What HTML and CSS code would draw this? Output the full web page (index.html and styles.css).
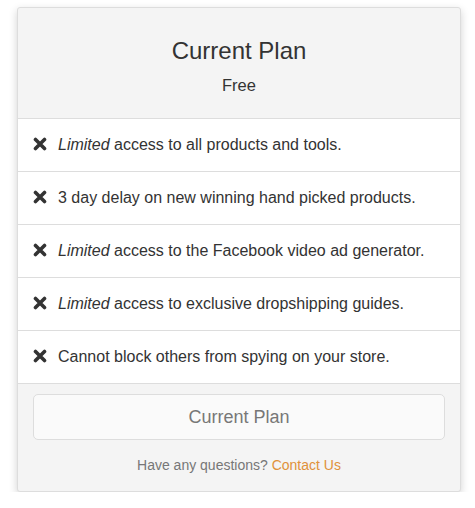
FILE: index.html
```html
<!DOCTYPE html>
<html>
<head>
<meta charset="utf-8">
<link rel="stylesheet" href="styles.css">
</head>
<body>
<div class="card">
  <div class="head">
    <h2 class="title">Current Plan</h2>
    <div class="price">Free</div>
  </div>
  <ul class="features">
    <li><svg class="x" viewBox="0 0 14 14"><path d="M2.5 2.5 L11.5 11.5 M11.5 2.5 L2.5 11.5"/></svg><span><em>Limited</em> access to all products and tools.</span></li>
    <li><svg class="x" viewBox="0 0 14 14"><path d="M2.5 2.5 L11.5 11.5 M11.5 2.5 L2.5 11.5"/></svg><span>3 day delay on new winning hand picked products.</span></li>
    <li><svg class="x" viewBox="0 0 14 14"><path d="M2.5 2.5 L11.5 11.5 M11.5 2.5 L2.5 11.5"/></svg><span><em>Limited</em> access to the Facebook video ad generator.</span></li>
    <li><svg class="x" viewBox="0 0 14 14"><path d="M2.5 2.5 L11.5 11.5 M11.5 2.5 L2.5 11.5"/></svg><span><em>Limited</em> access to exclusive dropshipping guides.</span></li>
    <li><svg class="x" viewBox="0 0 14 14"><path d="M2.5 2.5 L11.5 11.5 M11.5 2.5 L2.5 11.5"/></svg><span>Cannot block others from spying on your store.</span></li>
  </ul>
  <div class="foot">
    <button class="btn" type="button">Current Plan</button>
    <p class="help">Have any questions? <a href="#" class="link">Contact Us</a></p>
  </div>
</div>
</body>
</html>
```
FILE: styles.css
```css
* { box-sizing: border-box; }
body {
  margin: 0;
  padding: 7px 14px 0 17px;
  background: #fff;
  font-family: "Liberation Sans", Arial, sans-serif;
  color: #333;
}
.card {
  width: 444px;
  border: 1px solid #ddd;
  border-radius: 3px;
  background: #f4f4f4;
  box-shadow: 0 3px 8px rgba(0,0,0,0.18);
  overflow: hidden;
}
.head {
  height: 111px;
  padding-top: 30px;
  text-align: center;
  border-bottom: 1px solid #ddd;
}
.title {
  margin: 0;
  font-size: 24px;
  font-weight: normal;
  line-height: 26px;
  color: #333;
}
.price {
  margin-top: 11px;
  font-size: 16.5px;
  line-height: 20px;
}
.features {
  list-style: none;
  margin: 0;
  padding: 0;
  background: #fff;
}
.features li {
  height: 53px;
  display: flex;
  align-items: center;
  padding-left: 15px;
  border-bottom: 1px solid #ddd;
  font-size: 16px;
  line-height: 20px;
  color: #333;
}
.x {
  width: 14px;
  height: 14px;
  margin-right: 11px;
  margin-top: -2px;
  flex: none;
}
.x path {
  stroke: #333;
  stroke-width: 3.6;
  stroke-linecap: round;
  fill: none;
}
.foot {
  padding: 10px 15px 18px;
  text-align: center;
}
.btn {
  display: block;
  width: 100%;
  height: 46px;
  border: 1px solid #ddd;
  border-radius: 5px;
  background: #fafafa;
  color: #777;
  font-family: "Liberation Sans", Arial, sans-serif;
  font-size: 18px;
}
.help {
  margin: 17px 0 0;
  font-size: 14px;
  line-height: 16px;
  color: #777;
}
.link {
  color: #e0913a;
  text-decoration: none;
}
```
